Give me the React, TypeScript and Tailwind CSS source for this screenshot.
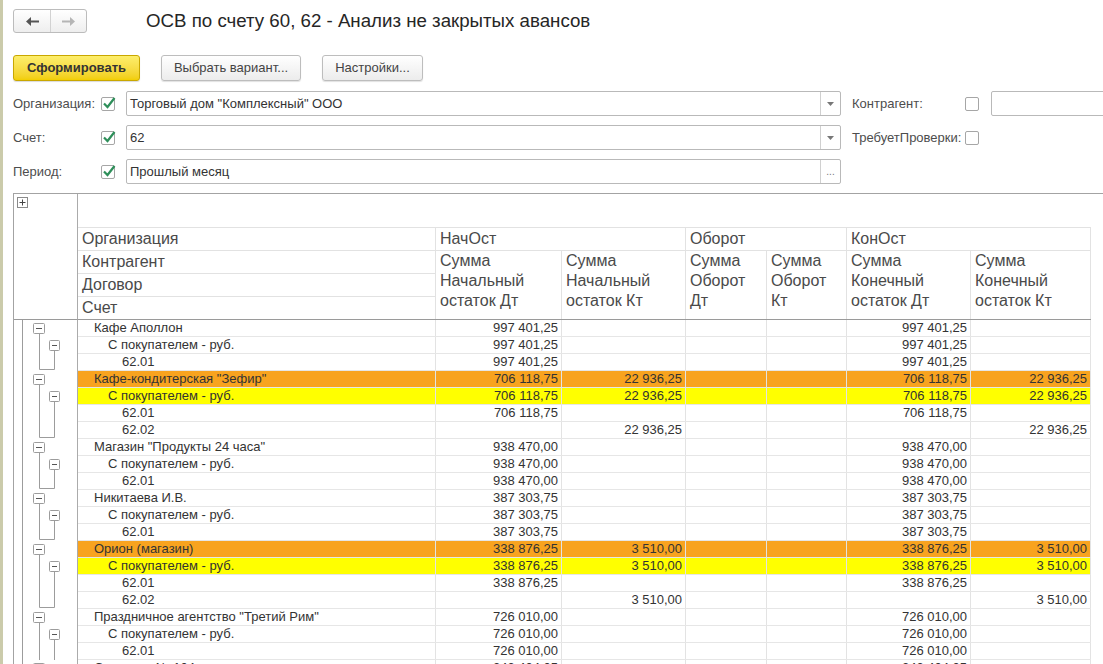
import React from 'react';

type Row = { label: string; level: 0 | 1 | 2; v: string[]; hl?: 'o' | 'y'; last?: boolean };

const one = (a: string) => [a, '', '', '', a, ''];
const two = (a: string, b: string) => [a, b, '', '', a, b];
const kt = (b: string) => ['', b, '', '', '', b];

const rows: Row[] = [
  { label: 'Кафе Аполлон', level: 0, v: one('997 401,25') },
  { label: 'С покупателем - руб.', level: 1, v: one('997 401,25') },
  { label: '62.01', level: 2, v: one('997 401,25'), last: true },
  { label: 'Кафе-кондитерская "Зефир"', level: 0, hl: 'o', v: two('706 118,75', '22 936,25') },
  { label: 'С покупателем - руб.', level: 1, hl: 'y', v: two('706 118,75', '22 936,25') },
  { label: '62.01', level: 2, v: one('706 118,75') },
  { label: '62.02', level: 2, v: kt('22 936,25'), last: true },
  { label: 'Магазин "Продукты 24 часа"', level: 0, v: one('938 470,00') },
  { label: 'С покупателем - руб.', level: 1, v: one('938 470,00') },
  { label: '62.01', level: 2, v: one('938 470,00'), last: true },
  { label: 'Никитаева И.В.', level: 0, v: one('387 303,75') },
  { label: 'С покупателем - руб.', level: 1, v: one('387 303,75') },
  { label: '62.01', level: 2, v: one('387 303,75'), last: true },
  { label: 'Орион (магазин)', level: 0, hl: 'o', v: two('338 876,25', '3 510,00') },
  { label: 'С покупателем - руб.', level: 1, hl: 'y', v: two('338 876,25', '3 510,00') },
  { label: '62.01', level: 2, v: one('338 876,25') },
  { label: '62.02', level: 2, v: kt('3 510,00'), last: true },
  { label: 'Праздничное агентство "Третий Рим"', level: 0, v: one('726 010,00') },
  { label: 'С покупателем - руб.', level: 1, v: one('726 010,00') },
  { label: '62.01', level: 2, v: one('726 010,00') },
  { label: 'Столовая № 104', level: 0, v: one('243 404,05') },
];

const colW = ['w-[126px]', 'w-[124px]', 'w-[81px]', 'w-[80px]', 'w-[124px]', 'w-[120px]'];

function Tree({ level, last }: { level: number; last?: boolean }) {
  const c = '#9c9c9c';
  return (
    <svg width="63" height="17" className="block">
      <line x1="8.5" y1="0" x2="8.5" y2="17" stroke={c} />
      {level === 0 && (
        <>
          <rect x="19.5" y="3.5" width="11" height="10" rx="1" fill="#fff" stroke={c} />
          <line x1="22" y1="8.5" x2="28" y2="8.5" stroke="#555" />
          <line x1="25.5" y1="13.5" x2="25.5" y2="17" stroke={c} />
        </>
      )}
      {level === 1 && (
        <>
          <line x1="25.5" y1="0" x2="25.5" y2="17" stroke={c} />
          <rect x="35.5" y="3.5" width="10" height="10" rx="1" fill="#fff" stroke={c} />
          <line x1="38" y1="8.5" x2="43" y2="8.5" stroke="#555" />
          <line x1="40.5" y1="13.5" x2="40.5" y2="17" stroke={c} />
        </>
      )}
      {level === 2 && (
        <>
          <line x1="25.5" y1="0" x2="25.5" y2={last ? 15.5 : 17} stroke={c} />
          <line x1="40.5" y1="0" x2="40.5" y2={last ? 15.5 : 17} stroke={c} />
          {last && <line x1="25.5" y1="15.5" x2="40.5" y2="15.5" stroke={c} />}
        </>
      )}
    </svg>
  );
}

function Check({ on }: { on?: boolean }) {
  return (
    <div className="relative w-[14px] h-[14px] shrink-0 border border-[#a6a6a6] rounded-[2px] bg-white">
      {on && (
        <svg width="16" height="16" viewBox="0 0 16 16" className="absolute left-[-1px] top-[-3px] overflow-visible">
          <path d="M3 8.5 L6.5 12 L13.5 3" fill="none" stroke="#2e8f5a" strokeWidth="2.2" />
        </svg>
      )}
    </div>
  );
}

function Input({ text, w, btn }: { text: string; w: string; btn?: 'dd' | 'dots' | 'none' }) {
  return (
    <div className={`flex h-[25px] ${w} shrink-0 border border-[#b9b9b9] rounded-[2px] bg-white`}>
      <div className="flex-1 pl-[3px] flex items-center text-[13px] text-[#333] whitespace-nowrap overflow-hidden">{text}</div>
      {btn === 'dd' && (
        <div className="w-[20px] border-l border-[#d0d0d0] flex items-center justify-center">
          <svg width="7" height="4"><path d="M0 0 L7 0 L3.5 4 Z" fill="#777" /></svg>
        </div>
      )}
      {btn === 'dots' && (
        <div className="w-[20px] border-l border-[#d0d0d0] flex items-end justify-center pb-[6px] text-[10px] leading-[10px] text-[#777]">...</div>
      )}
    </div>
  );
}

function Btn({ children, w, yellow }: { children: React.ReactNode; w: string; yellow?: boolean }) {
  return (
    <div
      className={`${w} h-[26px] flex items-center justify-center rounded-[3px] text-[13px] shrink-0 ${
        yellow
          ? 'bg-gradient-to-b from-[#fdee6a] to-[#f2ce00] border border-[#c9a700] font-bold text-[#333] shadow-[0_1px_1px_rgba(0,0,0,0.15)]'
          : 'bg-gradient-to-b from-white to-[#ececec] border border-[#bdbdbd] text-[#444] shadow-[0_1px_1px_rgba(0,0,0,0.12)]'
      }`}
    >
      {children}
    </div>
  );
}

export default function App() {
  return (
    <div className="w-[1103px] h-[664px] overflow-hidden bg-white border-l-[3px] border-[#cbcbab] font-['Liberation_Sans',Arial,sans-serif] text-[#333]">
      <div className="pl-[10px]">
        {/* Top bar */}
        <div className="flex items-center pt-[9px]">
          <div className="flex h-[24px] w-[74px] shrink-0 rounded-[3px] border border-[#bcbcbc] bg-gradient-to-b from-white to-[#eeeeee]">
            <div className="w-[37px] border-r border-[#d2d2d2] flex items-center justify-center">
              <svg width="13" height="9" viewBox="0 0 13 9">
                <path d="M13 4.5 H4" stroke="#555" strokeWidth="2" />
                <path d="M0 4.5 L5 0 L5 9 Z" fill="#555" />
              </svg>
            </div>
            <div className="flex-1 flex items-center justify-center">
              <svg width="13" height="9" viewBox="0 0 13 9">
                <path d="M0 4.5 H9" stroke="#b5b5b5" strokeWidth="2" />
                <path d="M13 4.5 L8 0 L8 9 Z" fill="#b5b5b5" />
              </svg>
            </div>
          </div>
          <div className="ml-[59px] text-[18.7px] text-[#262626] leading-[24px] whitespace-nowrap">ОСВ по счету 60, 62 - Анализ не закрытых авансов</div>
        </div>

        {/* Buttons */}
        <div className="flex gap-[21px] mt-[22px]">
          <Btn w="w-[127px]" yellow>Сформировать</Btn>
          <Btn w="w-[140px]">Выбрать вариант...</Btn>
          <Btn w="w-[101px]">Настройки...</Btn>
        </div>

        {/* Form */}
        <div className="mt-[10px] flex flex-col gap-[9px] text-[13px]">
          <div className="flex items-center h-[25px]">
            <div className="w-[88px] shrink-0 whitespace-nowrap text-[#4d4d4d]">Организация:</div>
            <Check on />
            <div className="w-[11px] shrink-0" />
            <Input w="w-[715px]" text={'Торговый дом "Комплексный" ООО'} btn="dd" />
            <div className="w-[11px] shrink-0" />
            <div className="w-[113px] shrink-0 whitespace-nowrap text-[#4d4d4d]">Контрагент:</div>
            <Check />
            <div className="w-[12px] shrink-0" />
            <Input w="w-[200px]" text="" btn="none" />
          </div>
          <div className="flex items-center h-[25px]">
            <div className="w-[88px] shrink-0 whitespace-nowrap text-[#4d4d4d]">Счет:</div>
            <Check on />
            <div className="w-[11px] shrink-0" />
            <Input w="w-[715px]" text="62" btn="dd" />
            <div className="w-[11px] shrink-0" />
            <div className="w-[113px] shrink-0 whitespace-nowrap text-[#4d4d4d]">ТребуетПроверки:</div>
            <Check />
          </div>
          <div className="flex items-center h-[25px]">
            <div className="w-[88px] shrink-0 whitespace-nowrap text-[#4d4d4d]">Период:</div>
            <Check on />
            <div className="w-[11px] shrink-0" />
            <Input w="w-[715px]" text="Прошлый месяц" btn="dots" />
          </div>
        </div>

        {/* Report */}
        <div className="mt-[9px] w-[1100px] border-t border-l border-[#a3a3a3]">
          {/* header */}
          <div className="flex">
            <div className="w-[64px] shrink-0 border-r border-b border-r-[#ababab] border-b-[#9a9a9a] relative">
              <svg width="12" height="12" className="absolute left-[3px] top-[3px]">
                <rect x="0.5" y="0.5" width="10" height="10" fill="#fff" stroke="#8a8a8a" />
                <line x1="2.5" y1="5.5" x2="8.5" y2="5.5" stroke="#444" />
                <line x1="5.5" y1="2.5" x2="5.5" y2="8.5" stroke="#444" />
              </svg>
            </div>
            <div className="w-[1013px] shrink-0 border-b border-[#9a9a9a] text-[16px] text-[#4a4a4a]">
              <div className="h-[34px] border-b border-[#e2e2e2]" />
              <div className="flex">
                <div className="w-[358px] border-r border-[#e2e2e2]">
                  <div className="h-[23px] border-b border-[#e2e2e2] pl-[4px] leading-[22px]">Организация</div>
                  <div className="h-[23px] border-b border-[#e2e2e2] pl-[4px] leading-[22px]">Контрагент</div>
                  <div className="h-[23px] border-b border-[#e2e2e2] pl-[4px] leading-[22px]">Договор</div>
                  <div className="h-[22px] pl-[4px] leading-[22px]">Счет</div>
                </div>
                <div className="w-[250px] border-r border-[#e2e2e2]">
                  <div className="h-[23px] border-b border-[#e2e2e2] pl-[4px] leading-[22px]">НачОст</div>
                  <div className="flex h-[68px] leading-[20px]">
                    <div className="w-[126px] border-r border-[#e2e2e2] pl-[4px]">Сумма<br />Начальный<br />остаток Дт</div>
                    <div className="flex-1 pl-[4px]">Сумма<br />Начальный<br />остаток Кт</div>
                  </div>
                </div>
                <div className="w-[161px] border-r border-[#e2e2e2]">
                  <div className="h-[23px] border-b border-[#e2e2e2] pl-[4px] leading-[22px]">Оборот</div>
                  <div className="flex h-[68px] leading-[20px]">
                    <div className="w-[81px] border-r border-[#e2e2e2] pl-[4px]">Сумма<br />Оборот<br />Дт</div>
                    <div className="flex-1 pl-[4px]">Сумма<br />Оборот<br />Кт</div>
                  </div>
                </div>
                <div className="w-[244px] border-r border-[#e2e2e2]">
                  <div className="h-[23px] border-b border-[#e2e2e2] pl-[4px] leading-[22px]">КонОст</div>
                  <div className="flex h-[68px] leading-[20px]">
                    <div className="w-[124px] border-r border-[#e2e2e2] pl-[4px]">Сумма<br />Конечный<br />остаток Дт</div>
                    <div className="flex-1 pl-[4px]">Сумма<br />Конечный<br />остаток Кт</div>
                  </div>
                </div>
              </div>
            </div>
          </div>

          {/* rows */}
          {rows.map((r, i) => (
            <div key={i} className="flex h-[17px]">
              <div className="w-[64px] shrink-0 border-r border-[#ababab]">
                <Tree level={r.level} last={r.last} />
              </div>
              <div
                className={`flex w-[1013px] shrink-0 border-b border-[#e6e6e6] text-[13px] leading-[16px] text-[#333] ${
                  r.hl === 'o' ? 'bg-[#f8a31f]' : r.hl === 'y' ? 'bg-[#ffff00]' : 'bg-white'
                }`}
              >
                <div
                  className={`w-[358px] shrink-0 border-r border-[#e3e3e3] whitespace-nowrap ${
                    r.level === 0 ? 'pl-[16px]' : r.level === 1 ? 'pl-[30px]' : 'pl-[44px]'
                  }`}
                >
                  {r.label}
                </div>
                {r.v.map((val, j) => (
                  <div key={j} className={`${colW[j]} shrink-0 border-r border-[#e3e3e3] text-right pr-[3px] whitespace-nowrap`}>
                    {val}
                  </div>
                ))}
              </div>
            </div>
          ))}
        </div>
      </div>
    </div>
  );
}
